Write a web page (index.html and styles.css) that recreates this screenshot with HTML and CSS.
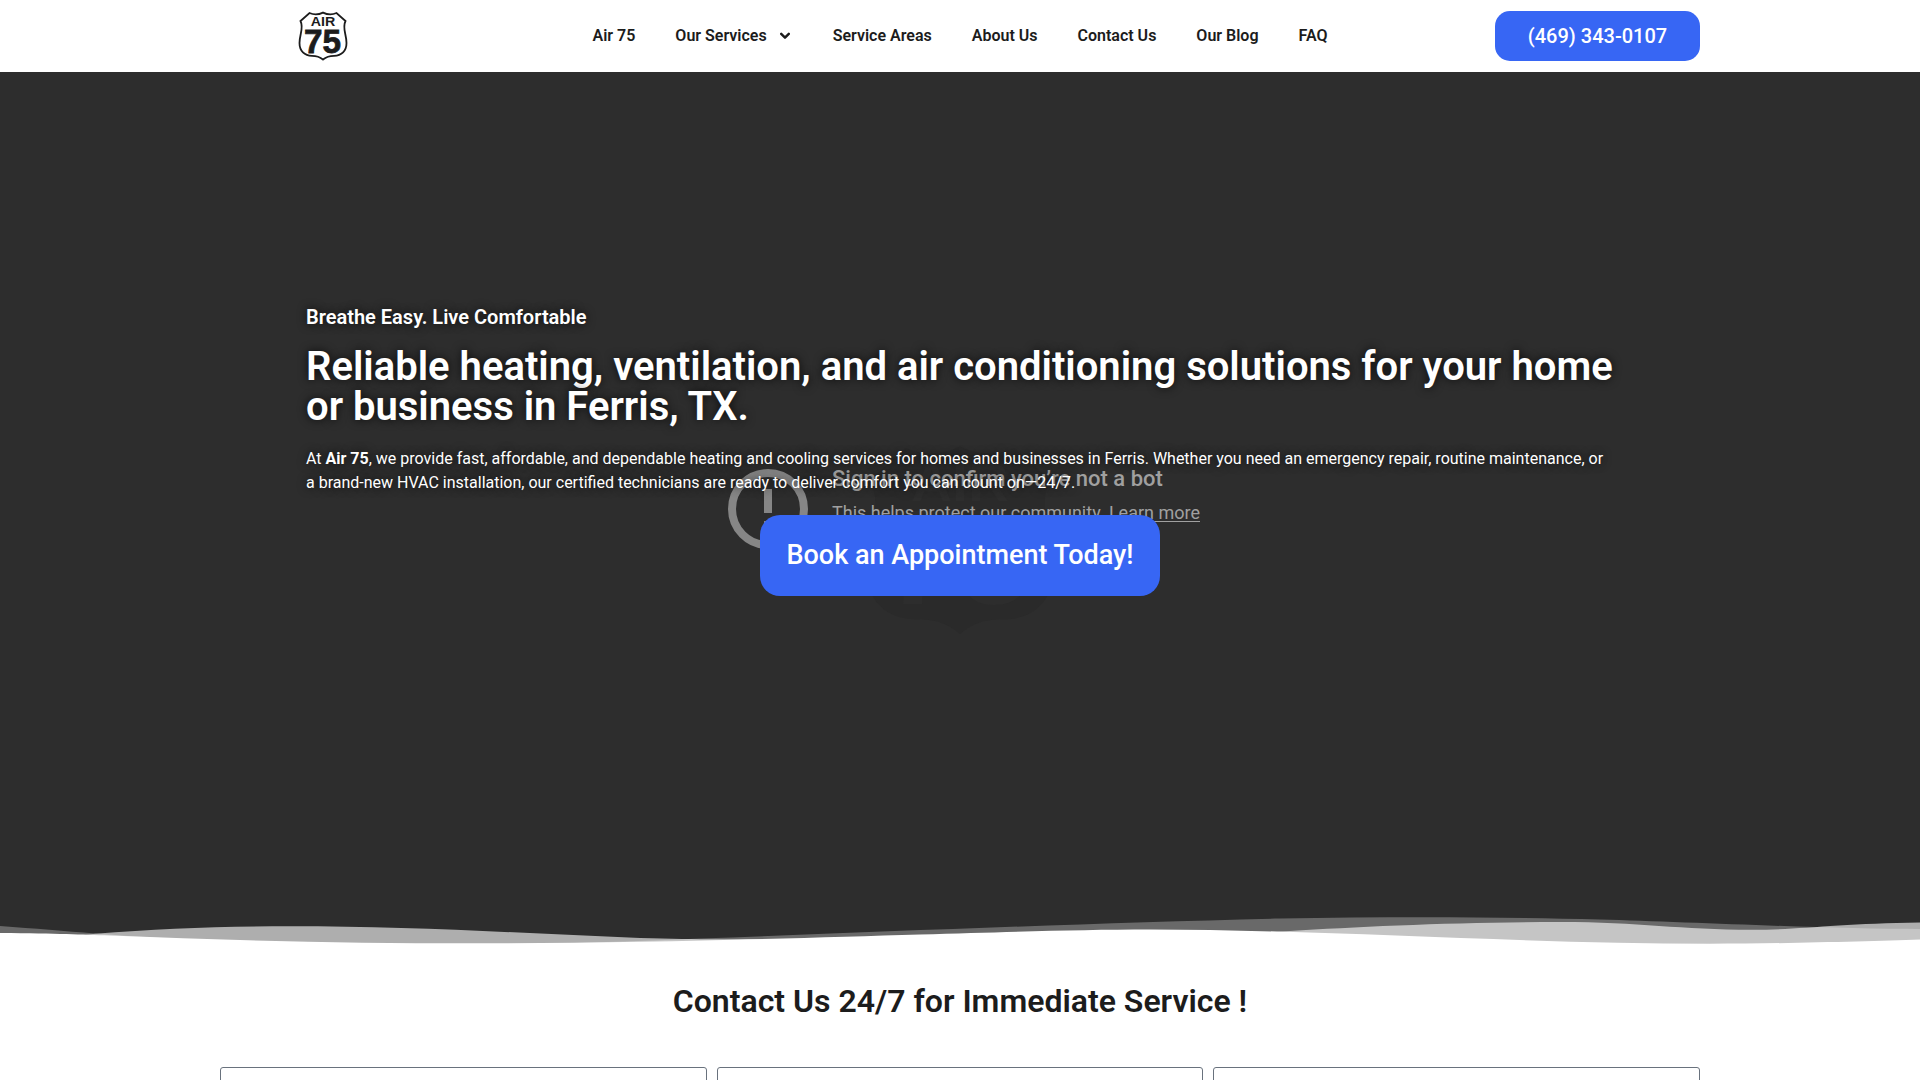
FILE: index.html
```html
<!DOCTYPE html>
<html lang="en">
<head>
  <meta charset="UTF-8">
  <meta name="viewport" content="width=device-width, initial-scale=1.0">
  <title>Air 75</title>
  <link rel="stylesheet" href="styles.css">
</head>
<body>

  <header class="header">
    <a class="logo" href="#">
      <svg width="50" height="50" viewBox="0 0 50 50">
        <path d="M11.5 2 Q18 5 25 1.6 Q32 5 38.500 2 L47.5 10 C44 17 48.500 23 48.500 32 C48.500 40 43.500 44.800 36 44.800 C30.500 44.800 28 46 25 48.500 C22 46 19.500 44.800 14 44.800 C6.500 44.800 1.500 40 1.500 32 C1.500 23 6 17 2.500 10 Z" fill="#fff" stroke="#1c1c1c" stroke-width="1.8"/>
        <text class="logo-air" x="25" y="15.2" text-anchor="middle" textLength="24.500" lengthAdjust="spacingAndGlyphs">AIR</text>
        <text class="logo-num" x="24.500" y="41.6" text-anchor="middle" textLength="37" lengthAdjust="spacingAndGlyphs">75</text>
      </svg>
    </a>
    <nav class="nav">
      <a href="#">Air 75</a>
      <a href="#">Our Services
        <svg class="chevron" width="10" height="8" viewBox="0 0 10 8"><path d="M1.2 1.8 L5 5.7 L8.8 1.8" fill="none" stroke="#1c1c1c" stroke-width="2.4" stroke-linecap="round" stroke-linejoin="round"/></svg>
      </a>
      <a href="#">Service Areas</a>
      <a href="#">About Us</a>
      <a href="#">Contact Us</a>
      <a href="#">Our Blog</a>
      <a href="#">FAQ</a>
    </nav>
    <a class="phone" href="#">(469) 343-0107</a>
  </header>

  <section class="hero">
    <div class="video">
      <svg class="watermark" width="200" height="200" viewBox="0 0 50 50">
        <path d="M11.5 2 Q18 5 25 1.6 Q32 5 38.500 2 L47.5 10 C44 17 48.500 23 48.500 32 C48.500 40 43.500 44.800 36 44.800 C30.500 44.800 28 46 25 48.500 C22 46 19.500 44.800 14 44.800 C6.500 44.800 1.500 40 1.500 32 C1.500 23 6 17 2.500 10 Z" fill="#2a2a2a"/>
        <text class="logo-air" x="25" y="15.2" text-anchor="middle" textLength="24.500" lengthAdjust="spacingAndGlyphs">AIR</text>
        <text class="logo-num" x="24.500" y="41" text-anchor="middle" textLength="37" lengthAdjust="spacingAndGlyphs">75</text>
      </svg>
      <div class="notice">
        <svg width="80" height="80" viewBox="0 0 80 80">
          <circle cx="40" cy="40" r="36" fill="none" stroke="#868686" stroke-width="8"/>
          <path d="M36 20h8v24h-8zM36 52h8v8h-8z" fill="#868686"/>
        </svg>
        <div>
          <p class="notice-title">Sign in to confirm you’re not a bot</p>
          <p class="notice-text">This helps protect our community. <u>Learn more</u></p>
        </div>
      </div>
    </div>

    <div class="hero-content">
      <h3>Breathe Easy. Live Comfortable</h3>
      <h1>Reliable heating, ventilation, and air conditioning solutions for your home or business in Ferris, TX.</h1>
      <p>At <strong>Air 75</strong>, we provide fast, affordable, and dependable heating and cooling services for homes and businesses in Ferris. Whether you need an emergency repair, routine maintenance, or a brand-new HVAC installation, our certified technicians are ready to deliver comfort you can count on—24/7.</p>
      <a class="book" href="#">Book an Appointment Today!</a>
    </div>

    <svg class="waves" viewBox="0 0 1920 40" preserveAspectRatio="none" fill="#fff">
      <path opacity=".286" d="M0 16 C35 18.500 65 21 95 23.500 C250 36 500 38 700 28.500 C880 22 1090 13 1280 8.500 C1390 6.500 1500 6.700 1600 9.500 C1690 12 1830 19 1920 19 V40 H0 Z"/>
      <path opacity=".614" d="M0 34 C40 33 70 27 95 23.800 C160 18.500 220 16.300 290 16.300 C410 16.300 520 23 640 28 C690 29.500 720 29.300 760 29 C950 36 1120 34 1290 21 C1360 16.500 1460 12 1560 12 C1640 12 1680 19.800 1752 19.800 C1800 19.800 1840 13.500 1920 12.500 V40 H0 Z"/>
      <path d="M0 23 C60 23.500 80 24.500 110 25.500 C230 30.500 350 33.300 470 33.300 C640 33.300 800 28 920 24.500 C1010 22 1080 19.500 1150 19.500 C1320 19.500 1520 33.700 1710 33.700 C1790 33.700 1870 31 1920 29.500 V40 H0 Z"/>
    </svg>
  </section>

  <section class="contact">
    <h2>Contact Us 24/7 for Immediate Service !</h2>
    <form class="fields">
      <input type="text">
      <input type="text">
      <input type="text">
    </form>
  </section>

</body>
</html>
```

FILE: styles.css
```css
* {
  box-sizing: border-box;
}

body {
  margin: 0;
  height: 1080px;
  overflow: hidden;
  font-family: Roboto, sans-serif;
  color: #1c1c1c;
  background-color: #fff;
}

a {
  color: inherit;
  text-decoration: none;
}

h1, h2, h3, p {
  margin: 0;
}

.header {
  display: grid;
  grid-template-columns: 270px 1fr 270px;
  align-items: center;
  width: 1402px;
  height: 72px;
  margin-left: 298px;
}

.logo {
  display: flex;
}

.logo-air {
  font: bold 13.5px "Liberation Sans", sans-serif;
  fill: #1c1c1c;
}

.logo-num {
  font: bold 34px "Liberation Sans", sans-serif;
  fill: #1c1c1c;
  stroke: #1c1c1c;
  stroke-width: 0.8px;
}

.nav {
  display: flex;
  gap: 40px;
  padding: 0 0 2px 24.5px;
  font-size: 16px;
  font-weight: 600;
  white-space: nowrap;
}

.chevron {
  margin: 0 3px 0 9px;
  vertical-align: 1px;
}

.phone {
  justify-self: end;
  width: 205px;
  height: 50px;
  border-radius: 15px;
  background-color: #3766f4;
  color: #fff;
  font-size: 20px;
  font-weight: 500;
  line-height: 50px;
  text-align: center;
}

.hero {
  position: relative;
  height: 878px;
  padding: 232px 306px 0;
  background-color: #2d2d2d;
  color: #fff;
}

/* blocked background video, sits under the hero text */
.video {
  position: absolute;
  inset: 0;
}

.watermark {
  position: absolute;
  left: 860px;
  top: 368px;
}

.watermark text {
  fill: #2d2d2d;
  stroke: none;
}

.notice {
  position: absolute;
  left: 728px;
  top: 397px;
  display: flex;
  gap: 24px;
  color: #a0a0a0;
  white-space: nowrap;
}

.notice-title {
  margin-top: -4px;
  font-size: 22px;
  font-weight: 500;
  line-height: 28px;
}

.notice-text {
  margin-top: 8px;
  font-size: 18px;
  line-height: 24px;
}

.notice-text u {
  text-underline-offset: 2px;
}

.hero-content {
  position: relative;
  display: flex;
  flex-direction: column;
  text-shadow: 0 0 10px rgba(0, 0, 0, 0.8);
}

.hero-content h3 {
  font-size: 20px;
  font-weight: 600;
  line-height: 26px;
}

.hero-content h1 {
  margin-top: 17px;
  font-size: 40px;
  font-weight: 600;
  line-height: 40px;
}

.hero-content p {
  margin-top: 20px;
  font-size: 16px;
  line-height: 24px;
}

.book {
  align-self: center;
  width: 400px;
  height: 81px;
  margin-top: 20px;
  border-radius: 20px;
  background-color: #3766f4;
  font-size: 27px;
  font-weight: 500;
  line-height: 80px;
  text-align: center;
  text-shadow: none;
}

.waves {
  position: absolute;
  left: 0;
  bottom: 0;
  width: 100%;
  height: 40px;
}

.contact {
  width: 1480px;
  margin: 0 auto;
  padding-top: 31px;
}

.contact h2 {
  font-size: 32px;
  font-weight: 600;
  line-height: 40px;
  text-align: center;
}

.fields {
  display: grid;
  grid-template-columns: repeat(3, 1fr);
  gap: 10px;
  margin-top: 46px;
}

.fields input {
  height: 47px;
  border: 1px solid #69727d;
  border-radius: 3px;
}
```
